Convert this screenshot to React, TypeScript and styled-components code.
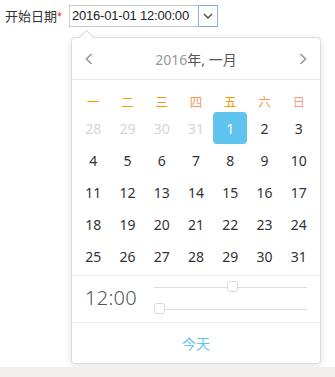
import React from "react";
import styled, { createGlobalStyle } from "styled-components";

const Global = createGlobalStyle`
  html { background: #f0efee; }
  body { margin: 0; font-family: "Noto Sans", "Noto Sans CJK SC", sans-serif; }
`;

const Page = styled.div`
  height: 367px;
  background: #fff;
  box-sizing: border-box;
  padding: 5px 0 0 5px;
`;

const Field = styled.div`
  display: flex;
  align-items: center;
  height: 22px;
`;

const Label = styled.span`
  font-family: "Noto Sans CJK SC", sans-serif;
  font-size: 13px;
  color: #333;
  width: 64px;
  line-height: 22px;
`;

const Star = styled.span`
  color: #e33;
  font-family: "Liberation Sans", sans-serif;
  font-size: 13px;
`;

const InputBox = styled.div`
  display: flex;
  width: 149px;
  height: 22px;
  box-sizing: border-box;
  border: 1px solid #ccc;
`;

const InputText = styled.span`
  flex: 1;
  font-family: "Liberation Sans", Arial, sans-serif;
  font-size: 13px;
  letter-spacing: -0.2px;
  color: #222;
  line-height: 20px;
  padding-left: 2px;
`;

const DropBtn = styled.span`
  width: 18px;
  margin: -1px -1px -1px 0;
  border: 1px solid #85aaf0;
  display: flex;
  align-items: center;
  justify-content: center;
`;

const Popup = styled.div`
  position: relative;
  margin: 10px 0 0 66px;
  width: 250px;
  box-sizing: border-box;
  border: 1px solid #ddd;
  border-radius: 4px;
  background: #fff;
  box-shadow: 0 2px 8px rgba(0, 0, 0, 0.12);
`;

const Arrow = styled.span`
  position: absolute;
  top: -6px;
  left: 9px;
  width: 10px;
  height: 10px;
  background: #fff;
  border-top: 1px solid #ddd;
  border-left: 1px solid #ddd;
  transform: rotate(45deg);
`;

const Header = styled.div`
  height: 41px;
  border-bottom: 1px solid #e8e8e8;
  display: flex;
  align-items: center;
  justify-content: space-between;
  padding: 0 13px;
`;

const Title = styled.span`
  font-size: 14px;
  color: #555;
`;

const Year = styled.span`
  color: #999;
`;

const Body = styled.div`
  padding: 10px 4px 3px 4px;
  border-bottom: 1px solid #eee;
`;

const Grid = styled.div`
  display: grid;
  grid-template-columns: repeat(7, 1fr);
`;

const WeekDay = styled.div<{ $color: string }>`
  height: 22px;
  display: flex;
  align-items: center;
  justify-content: center;
  font-size: 12.5px;
  font-family: "Noto Sans CJK SC", sans-serif;
  color: ${(p) => p.$color};
`;

const Day = styled.div<{ $muted?: boolean; $active?: boolean }>`
  height: 32px;
  display: flex;
  align-items: center;
  justify-content: center;
  font-size: 14px;
  border-radius: 4px;
  color: ${(p) => (p.$active ? "#fff" : p.$muted ? "#d5d5d5" : "#333")};
  background: ${(p) => (p.$active ? "#5ec3ef" : "transparent")};
`;

const TimeRow = styled.div`
  height: 46px;
  display: flex;
  align-items: center;
  padding: 0 13px 0 13px;
  border-bottom: 1px solid #eee;
`;

const TimeText = styled.span`
  width: 69px;
  font-size: 20px;
  color: #555;
  font-weight: 300;
  letter-spacing: 0.3px;
  margin-top: -3px;
`;

const Sliders = styled.div`
  flex: 1;
  display: flex;
  flex-direction: column;
  gap: 15px;
  margin-top: -2px;
`;

const Track = styled.div`
  position: relative;
  height: 1px;
  background: #ddd;
  margin: 3px 0;
`;

const Thumb = styled.span`
  position: absolute;
  top: -6px;
  width: 11px;
  height: 11px;
  box-sizing: border-box;
  border: 1px solid #d8d8d8;
  border-radius: 3px;
  background: #fff;
`;

const Footer = styled.div`
  height: 40px;
  display: flex;
  align-items: center;
  justify-content: center;
  font-size: 14px;
  font-family: "Noto Sans CJK SC", sans-serif;
  color: #5ec3ef;
`;

const Chevron = ({ dir }: { dir: "left" | "right" }) => (
  <svg width="8" height="12" viewBox="0 0 8 12">
    <path
      d={dir === "left" ? "M6.5 1 L1.5 6 L6.5 11" : "M1.5 1 L6.5 6 L1.5 11"}
      fill="none"
      stroke="#999"
      strokeWidth="1.6"
    />
  </svg>
);

const weekdays: [string, string][] = [
  ["一", "#ff9900"],
  ["二", "#ff9900"],
  ["三", "#ff9900"],
  ["四", "#f7975f"],
  ["五", "#ff9900"],
  ["六", "#f9a058"],
  ["日", "#f99a8c"],
];

export default function App() {
  const days: { n: number; muted?: boolean; active?: boolean }[] = [];
  [28, 29, 30, 31].forEach((n) => days.push({ n, muted: true }));
  for (let i = 1; i <= 31; i++) days.push({ n: i, active: i === 1 });

  return (
    <>
      <Global />
      <Page>
        <Field>
          <Label>
            开始日期<Star>*</Star>
          </Label>
          <InputBox>
            <InputText>2016-01-01 12:00:00</InputText>
            <DropBtn>
              <svg width="10" height="6" viewBox="0 0 10 6">
                <path d="M1 1 L5 5 L9 1" fill="none" stroke="#444" strokeWidth="1.3" />
              </svg>
            </DropBtn>
          </InputBox>
        </Field>
        <Popup>
          <Arrow />
          <Header>
            <Chevron dir="left" />
            <Title>
              <Year>2016</Year>年, 一月
            </Title>
            <Chevron dir="right" />
          </Header>
          <Body>
            <Grid>
              {weekdays.map(([w, c]) => (
                <WeekDay key={w} $color={c}>
                  {w}
                </WeekDay>
              ))}
              {days.map((d, i) => (
                <Day key={i} $muted={d.muted} $active={d.active}>
                  {d.n}
                </Day>
              ))}
            </Grid>
          </Body>
          <TimeRow>
            <TimeText>12:00</TimeText>
            <Sliders>
              <Track>
                <Thumb style={{ left: "48%" }} />
              </Track>
              <Track>
                <Thumb style={{ left: 0 }} />
              </Track>
            </Sliders>
          </TimeRow>
          <Footer>今天</Footer>
        </Popup>
      </Page>
    </>
  );
}
